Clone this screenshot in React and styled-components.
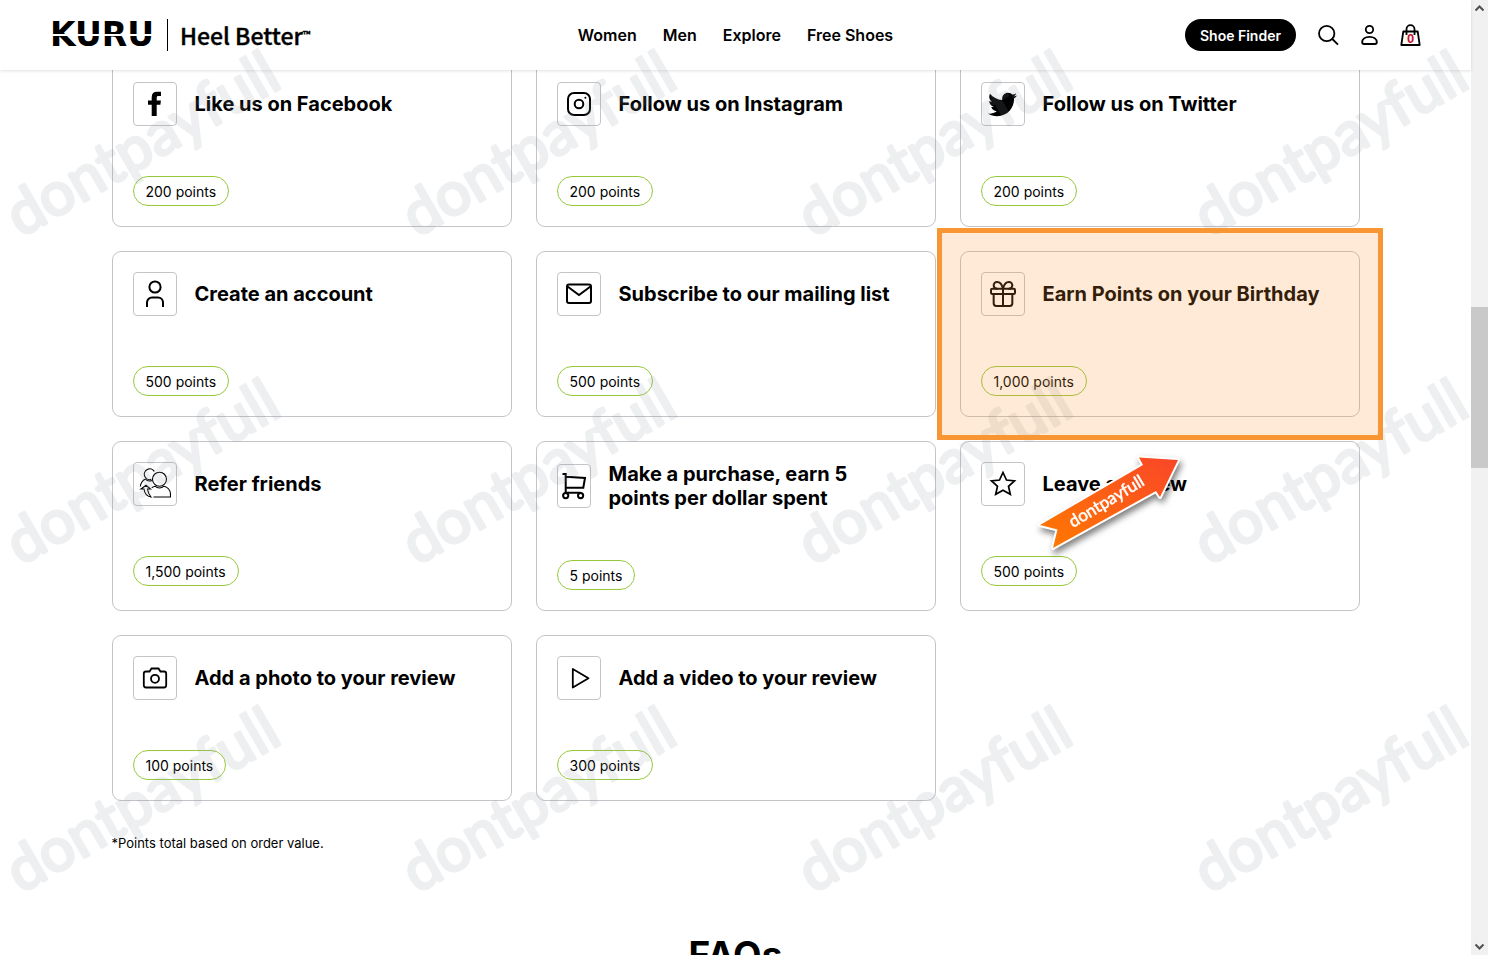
import React from "react";
import styled, { createGlobalStyle } from "styled-components";
import { FaTwitter } from "react-icons/fa";
import { Gift } from "lucide-react";

const GlobalStyle = createGlobalStyle`
  * {
    box-sizing: border-box;
  }
  body {
    margin: 0;
    background: #fff;
    color: #000;
    font-family: Inter, "Liberation Sans", sans-serif;
    overflow: hidden;
  }
`;

const Page = styled.div`
  position: relative;
  display: flex;
  height: 100vh;
  overflow: hidden;
`;

const Content = styled.div`
  flex: 1;
  min-width: 0;
`;

const HeaderStyle = styled.header`
  position: absolute;
  top: 0;
  left: 0;
  right: 17px;
  z-index: 10;
  display: grid;
  grid-template-columns: 1fr auto 1fr;
  align-items: center;
  height: 70px;
  padding: 0 50px;
  background: #fff;
  box-shadow: 0 1px 3px rgba(0, 0, 0, 0.12);
`;

const Brand = styled.a`
  display: flex;
  align-items: center;
  color: #000;
  text-decoration: none;
`;

const BrandName = styled.span`
  position: relative;
  font-family: "DejaVu Sans", sans-serif;
  font-size: 33px;
  font-weight: 700;
  line-height: 32px;

  /* the cut that runs through the letters */
  &::after {
    content: "";
    position: absolute;
    left: 0;
    right: 0;
    top: 15px;
    height: 2px;
    background: #fff;
  }
`;

const Tagline = styled.span`
  margin-left: 13px;
  padding-left: 12px;
  border-left: 1px solid #000;
  font-family: "Noto Sans CJK JP", "Noto Sans", sans-serif;
  font-size: 23px;
  font-weight: 500;
  line-height: 32px;
  white-space: nowrap;
  -webkit-text-stroke: 0.4px #000;
`;

const Trademark = styled.sup`
  font-size: 10px;
  line-height: 10px;
  vertical-align: 6px;
`;

const Nav = styled.nav`
  display: flex;
  gap: 26px;
`;

const NavLink = styled.a`
  color: #000;
  font-size: 16px;
  font-weight: 600;
  line-height: 24px;
  text-decoration: none;
`;

const Actions = styled.div`
  display: flex;
  align-items: center;
  justify-content: flex-end;
  gap: 22px;
`;

const ShoeFinder = styled.button`
  height: 32px;
  padding: 0 15px;
  border: 0;
  border-radius: 16px;
  background: #000;
  color: #fff;
  font-family: inherit;
  font-size: 14px;
  font-weight: 600;
  white-space: nowrap;
`;

const IconButton = styled.button`
  position: relative;
  display: flex;
  padding: 0;
  border: 0;
  background: none;
  color: #000;
`;

const BagCount = styled.span`
  position: absolute;
  left: 0;
  right: 0;
  bottom: 0;
  color: #c8102e;
  font-size: 13px;
  font-weight: 600;
  line-height: 14px;
  text-align: center;
`;

const Main = styled.main`
  max-width: 1296px;
  margin: 0 auto;
  padding: 61px 24px 0;
`;

const CardGrid = styled.div`
  display: grid;
  grid-template-columns: repeat(3, minmax(0, 1fr));
  gap: 24px;
`;

const CardStyle = styled.section`
  position: relative;
  padding: 20px;
  border: 1px solid #c4c4c8;
  border-radius: 9px;
`;

const CardHead = styled.div`
  display: flex;
  align-items: center;
  gap: 18px;
  min-height: 44px;
`;

const IconBox = styled.div`
  display: flex;
  flex-shrink: 0;
  align-items: center;
  justify-content: center;
  width: ${(props) => (props.$narrow ? "34px" : "44px")};
  height: 44px;
  border: 1px solid #c4c4c8;
  border-radius: 4px;
`;

const CardTitle = styled.h3`
  margin: 0;
  padding-right: 12px;
  font-size: 20px;
  font-weight: 700;
  line-height: 24px;
`;

const Points = styled.span`
  display: block;
  width: fit-content;
  height: 30px;
  margin-top: 50px;
  padding: 0 12px;
  border: 1px solid #97c93d;
  border-radius: 15px;
  font-size: 14px;
  line-height: 29px;
`;

const Highlight = styled.div`
  position: absolute;
  inset: -24px;
  z-index: 30;
  border: 5px solid #f79633;
  background: rgba(250, 150, 51, 0.2);
  background-clip: padding-box;
`;

const ArrowStyle = styled.svg`
  position: absolute;
  left: 70px;
  top: 196px;
  z-index: 40;
  overflow: visible;
  filter: drop-shadow(2px 4px 3px rgba(0, 0, 0, 0.5));
`;

const Footnote = styled.p`
  margin: 32px 0 0;
  font-size: 13px;
  line-height: 20px;
`;

const FaqTitle = styled.h2`
  margin: 80px 0 0;
  font-size: 37px;
  font-weight: 700;
  line-height: 44px;
  text-align: center;
`;

const Watermarks = styled.div`
  position: absolute;
  inset: 0;
  z-index: 20;
  display: grid;
  grid-template-columns: repeat(4, 396px);
  grid-auto-rows: 328px;
  overflow: hidden;
  opacity: 0.15;
  pointer-events: none;
`;

const WatermarkStyle = styled.svg`
  display: block;
  overflow: visible;
  fill: #8c96a0;
  stroke: #8c96a0;
  stroke-width: 3px;
  stroke-linejoin: round;
  font-family: Lato, sans-serif;
  font-size: 61px;
`;

const Scrollbar = styled.div`
  display: flex;
  flex-direction: column;
  align-items: center;
  justify-content: space-between;
  width: 17px;
  background: #f1f1f1;
`;

const ScrollArrow = styled.svg`
  display: block;
  transform: ${(props) => (props.$down ? "rotate(180deg)" : "none")};
`;

const ScrollTrack = styled.div`
  flex: 1;
  width: 100%;
  display: grid;
  grid-template-rows: 290fr 161fr 470fr;
`;

const ScrollThumb = styled.div`
  grid-row: 2;
  background: #c9c9c9;
`;

const Icon = ({ children, width = 2 }) => (
  <svg
    width="32"
    height="32"
    viewBox="6 6 32 32"
    fill="none"
    stroke="currentColor"
    strokeWidth={width}
    aria-hidden="true"
  >
    {children}
  </svg>
);

const FacebookIcon = () => (
  <Icon>
    <path
      d="M28 9.800v4.200h-2.600c-1.200 0-1.700.5-1.700 1.600v2.900h4.200l-.5 4.200h-3.700V34h-5V22.700h-3.700v-4.200h3.700v-3.600c0-3.300 2-5.100 5.200-5.100z"
      fill="currentColor"
      stroke="none"
    />
  </Icon>
);

const InstagramIcon = () => (
  <Icon>
    <rect x="11" y="11" width="22" height="22" rx="6" />
    <circle cx="22" cy="22" r="4.3" />
    <circle cx="28.4" cy="15.7" r="1" fill="currentColor" stroke="none" />
  </Icon>
);

const UserIcon = () => (
  <Icon>
    <circle cx="22" cy="15" r="5.6" />
    <path d="M14 35v-4.500a5 5 0 0 1 5-5h6a5 5 0 0 1 5 5v4.500" />
  </Icon>
);

const MailIcon = () => (
  <Icon>
    <rect x="10" y="12.500" width="24" height="18.500" rx="2" />
    <path d="M10.500 14.500 22 23l11.500-8.500" />
  </Icon>
);

const ReferIcon = () => (
  <Icon width={1.1}>
    <circle cx="26.500" cy="17.200" r="7" />
    <path d="M21.300 9.400a5.400 5.400 0 1 0-3 8" />
    <path d="M12.500 17c-2.500 1.200-4.700 3.500-5.200 7.500M12.500 17c1.500 2 4.200 2.300 6.500 1.500" />
    <path d="M20.500 35H37.500v-2.500c0-4.500-3.300-7.500-6.500-8.300-2.500 2.300-6.500 2.300-9 0-1.200.3-2.300.8-3.200 1.500" />
    <path d="M18 35c-4-.7-6.500-3.800-7-8H8l5-3.700 4.500 3.700h-3c.3 3 1.300 5.500 3.500 8z" />
  </Icon>
);

const CartIcon = () => (
  <Icon>
    <path d="M10.500 10h3.200v18.800h15M13.700 12.700l19.300 1.200-1.700 9.800H13.700" />
    <circle cx="13.700" cy="31.600" r="2.600" />
    <circle cx="28.600" cy="31.600" r="2.600" />
  </Icon>
);

const StarIcon = () => (
  <Icon width={1.7}>
    <path d="M22 10.500l3.500 7.500 8 .8-6 5.500 1.800 8-7.300-4.100-7.300 4.100 1.800-8-6-5.500 8-.8z" />
  </Icon>
);

const CameraIcon = () => (
  <Icon width={1.8}>
    <path d="M13 15.500h3.500l2-3h7l2 3H31a2.200 2.200 0 0 1 2.200 2.200v11.600a2.200 2.200 0 0 1-2.200 2.200H13a2.200 2.200 0 0 1-2.200-2.200V17.700a2.200 2.200 0 0 1 2.200-2.200z" />
    <circle cx="22" cy="22.800" r="4" />
  </Icon>
);

const PlayIcon = () => (
  <Icon width={1.8}>
    <path d="M15.800 13v18.500L31.500 22.200z" strokeLinejoin="round" />
  </Icon>
);

const tasks = [
  { title: "Like us on Facebook", points: "200", icon: <FacebookIcon /> },
  { title: "Follow us on Instagram", points: "200", icon: <InstagramIcon /> },
  { title: "Follow us on Twitter", points: "200", icon: <FaTwitter size={29} /> },
  { title: "Create an account", points: "500", icon: <UserIcon /> },
  { title: "Subscribe to our mailing list", points: "500", icon: <MailIcon /> },
  {
    title: "Earn Points on your Birthday",
    points: "1,000",
    icon: <Gift size={32} strokeWidth={1.5} />,
    highlighted: true,
  },
  { title: "Refer friends", points: "1,500", icon: <ReferIcon /> },
  {
    title: "Make a purchase, earn 5 points per dollar spent",
    points: "5",
    icon: <CartIcon />,
    narrow: true,
  },
  { title: "Leave a review", points: "500", icon: <StarIcon /> },
  { title: "Add a photo to your review", points: "100", icon: <CameraIcon /> },
  { title: "Add a video to your review", points: "300", icon: <PlayIcon /> },
];

const Arrow = () => (
  <ArrowStyle width="152" height="104" viewBox="1031 448 152 104">
    <defs>
      <linearGradient id="arrow" x1="0" y1="1" x2="1" y2="0">
        <stop offset="0" stopColor="#ff7a00" />
        <stop offset="1" stopColor="#fa4628" />
      </linearGradient>
    </defs>
    <path
      d="M1040 525 1143 465 1139 457.500 1178 460 1160 497 1156 491 1053 548 1057.500 529.500z"
      fill="url(#arrow)"
      stroke="#fff"
      strokeWidth="4"
      strokeLinejoin="round"
      paintOrder="stroke"
    />
    <text
      transform="translate(1073 528) rotate(-31)"
      fill="#fff"
      stroke="#fff"
      strokeWidth="0.5"
      fontFamily="Lato, sans-serif"
      fontSize="17"
    >
      dontpayfull
    </text>
  </ArrowStyle>
);

const Watermark = () => (
  <WatermarkStyle width="396" height="328">
    <text transform="translate(21 238) rotate(-30)">dontpayfull</text>
  </WatermarkStyle>
);

const Card = ({ title, points, icon, narrow, highlighted }) => (
  <CardStyle>
    <CardHead>
      <IconBox $narrow={narrow}>{icon}</IconBox>
      <CardTitle>{title}</CardTitle>
    </CardHead>
    <Points>{points} points</Points>
    {highlighted && (
      <>
        <Highlight />
        <Arrow />
      </>
    )}
  </CardStyle>
);

const Header = () => (
  <HeaderStyle>
    <Brand href="#">
      <BrandName>KURU</BrandName>
      <Tagline>
        Heel Better<Trademark>™</Trademark>
      </Tagline>
    </Brand>
    <Nav>
      <NavLink href="#">Women</NavLink>
      <NavLink href="#">Men</NavLink>
      <NavLink href="#">Explore</NavLink>
      <NavLink href="#">Free Shoes</NavLink>
    </Nav>
    <Actions>
      <ShoeFinder>Shoe Finder</ShoeFinder>
      <IconButton aria-label="Search">
        <svg width="21" height="22" viewBox="0 0 21 22" fill="none" stroke="currentColor" strokeWidth="1.8">
          <circle cx="8.700" cy="9.500" r="7.700" />
          <path d="M14.300 15l5.700 5.700" />
        </svg>
      </IconButton>
      <IconButton aria-label="Account">
        <svg width="17" height="22" viewBox="0 0 17 22" fill="none" stroke="currentColor" strokeWidth="1.800">
          <circle cx="8.500" cy="5.500" r="3.700" />
          <path d="M3 20c-1.200 0-1.800-.8-1.800-1.700 0-3.500 3.200-5.500 7.300-5.500s7.300 2 7.300 5.500c0 .9-.6 1.700-1.800 1.700z" />
        </svg>
      </IconButton>
      <IconButton aria-label="Bag">
        <svg width="21" height="22" viewBox="0 0 21 22" fill="none" stroke="currentColor" strokeWidth="1.800">
          <path d="M3.300 7.500h14.400l2 13.500H1.300z" strokeLinejoin="round" />
          <path d="M6.500 11V5.200a4 4 0 0 1 8 0V11" />
        </svg>
        <BagCount>0</BagCount>
      </IconButton>
    </Actions>
  </HeaderStyle>
);

const Chevron = ({ down }) => (
  <ScrollArrow $down={down} width="17" height="17" viewBox="0 0 17 17" aria-hidden="true">
    <path d="M4.500 10.500l4-4 4 4" fill="none" stroke="#505050" strokeWidth="2" />
  </ScrollArrow>
);

const App = () => {
  return (
    <>
      <GlobalStyle />
      <Page>
        <Content>
          <Header />
          <Main>
            <CardGrid>
              {tasks.map((task) => (
                <Card key={task.title} {...task} />
              ))}
            </CardGrid>
            <Footnote>*Points total based on order value.</Footnote>
            <FaqTitle>FAQs</FaqTitle>
          </Main>
        </Content>
        <Scrollbar>
          <Chevron />
          <ScrollTrack>
            <ScrollThumb />
          </ScrollTrack>
          <Chevron down />
        </Scrollbar>
        <Watermarks aria-hidden="true">
          {Array.from({ length: 12 }, (_, i) => (
            <Watermark key={i} />
          ))}
        </Watermarks>
      </Page>
    </>
  );
};

export default App;
